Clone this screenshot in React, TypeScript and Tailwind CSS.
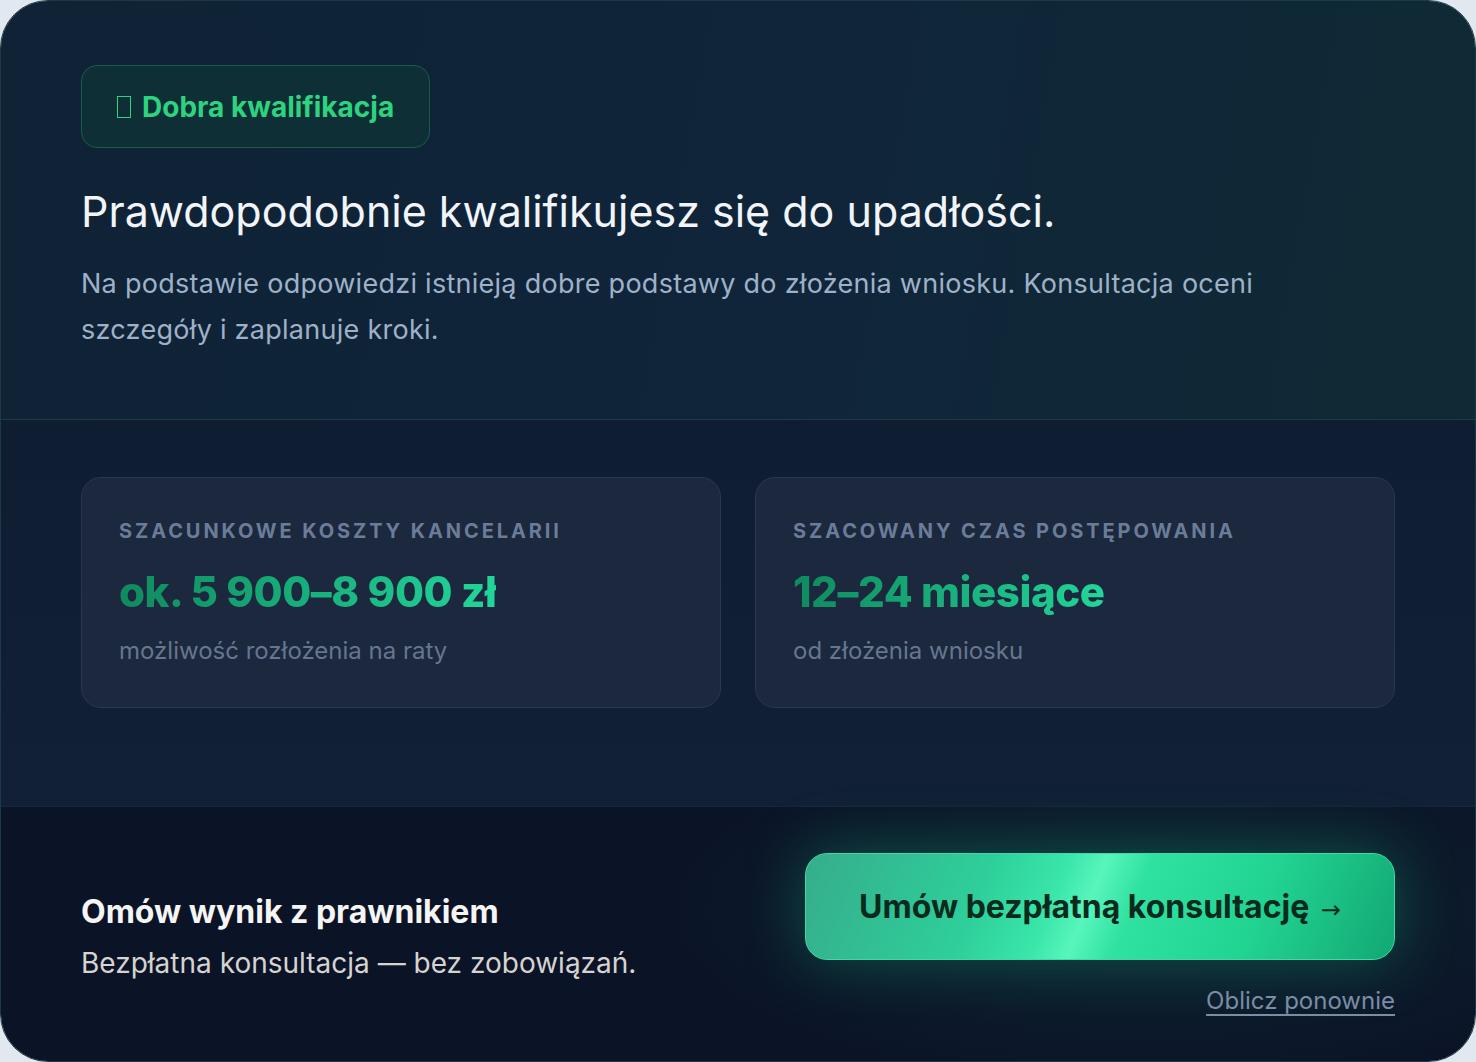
import React from 'react';

const font = { fontFamily: 'Inter, "Noto Sans", sans-serif' };

interface StatProps {
  label: string;
  value: string;
  note: string;
}

const StatCard: React.FC<StatProps> = ({ label, value, note }) => (
  <div className="flex-1 rounded-[20px] border border-[#2a374d] bg-[#1b283d] px-[37px] pt-[41px] pb-[40px]">
    <div className="text-[20px] leading-[24px] font-bold uppercase tracking-[0.145em] text-[#6b7c99]">{label}</div>
    <div className="mt-[24px] text-[42px] leading-[50px] font-extrabold tracking-[-0.01em] bg-gradient-to-r from-[#0f8a5f] to-[#22d699] bg-clip-text text-transparent w-fit">
      {value}
    </div>
    <div className="mt-[18px] text-[24px] leading-[32px] text-[#66768f]">{note}</div>
  </div>
);

export default function App() {
  return (
    <div className="min-h-screen w-full bg-[#e2e8f0]" style={font}>
      <div className="h-[1062px] w-full rounded-[48px] border border-[#1b3b44] overflow-hidden flex flex-col">
        {/* Result header */}
        <section className="h-[418px] shrink-0 bg-[linear-gradient(100deg,#0f2236_0%,#10253a_55%,#0f2a34_100%)] px-[80px] pt-[64px]">
          <div className="inline-flex items-center h-[83px] px-[35px] rounded-[16px] border border-[#1c5a49] bg-[#0f2f37] text-[#2dd37e] text-[28px] font-bold">
            <span className="inline-block w-[14px] h-[22px] border-[1.5px] border-current mr-[11px]" />
            Dobra kwalifikacja
          </div>
          <h1 className="mt-[38px] text-[43px] leading-[50px] font-normal text-[#f1f5f9]">
            Prawdopodobnie kwalifikujesz się do upadłości.
          </h1>
          <p className="mt-[25px] max-w-[1240px] text-[27px] leading-[46px] tracking-[0.01em] text-[#9fb1c8]">
            Na podstawie odpowiedzi istnieją dobre podstawy do złożenia wniosku. Konsultacja oceni szczegóły i zaplanuje kroki.
          </p>
        </section>

        {/* Estimates */}
        <section className="h-[387px] shrink-0 border-t border-[#1b3d45] bg-[linear-gradient(180deg,#0f1d33_0%,#112036_100%)] px-[80px] pt-[57px]">
          <div className="flex gap-[34px]">
            <StatCard label="Szacunkowe koszty kancelarii" value="ok. 5 900–8 900 zł" note="możliwość rozłożenia na raty" />
            <StatCard label="Szacowany czas postępowania" value="12–24 miesiące" note="od złożenia wniosku" />
          </div>
        </section>

        {/* Call to action */}
        <section className="flex-1 border-t border-[#142838] bg-[radial-gradient(ellipse_700px_260px_at_78%_40%,#0f2431_0%,#0b1427_70%)] px-[80px] pt-[46px] flex items-start justify-between">
          <div className="mt-[39px]">
            <div className="text-[32px] leading-[40px] font-bold text-[#f5f5f4]">Omów wynik z prawnikiem</div>
            <div className="mt-[11px] text-[28px] leading-[40px] text-[#d6d3d1]">Bezpłatna konsultacja — bez zobowiązań.</div>
          </div>
          <div className="flex flex-col items-end">
            <button className="w-[590px] h-[107px] rounded-[22px] border border-[#3fd9a4] text-[32px] font-bold text-[#0b2a1e] bg-[linear-gradient(112deg,#36ad8c_0%,#2ecf9a_30%,#3ae6aa_42%,#58f5bc_48%,#30e2a2_55%,#22d492_75%,#12a874_100%)] shadow-[0_0_60px_rgba(16,185,129,0.35)]">
              Umów bezpłatną konsultację{' '}
              <span className="ml-[4px] text-[24px] font-normal" style={{ fontFamily: '"DejaVu Sans", sans-serif' }}>→</span>
            </button>
            <a href="#" className="mt-[26px] text-[24px] leading-[30px] text-[#7b8ca5] underline underline-offset-[5px]">
              Oblicz ponownie
            </a>
          </div>
        </section>
      </div>
    </div>
  );
}
